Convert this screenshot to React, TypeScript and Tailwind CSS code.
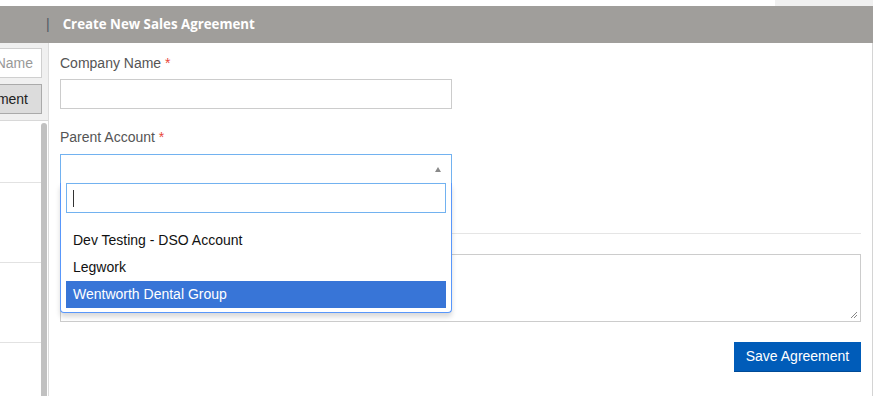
import React from 'react';

const options = ['Dev Testing - DSO Account', 'Legwork', 'Wentworth Dental Group'];

function SidePanel() {
  return (
    <div className="flex w-[49px] shrink-0 flex-col border-r border-[#dcdcdc] bg-[#f0f0f0]">
      <div className="flex flex-col gap-[6px] pt-[5px] pr-[6px]">
        <div className="flex h-[30px] items-center justify-end border border-l-0 border-[#cfcfcf] bg-white pr-[8px] text-[14px] text-[#999]">
          Name
        </div>
        <div className="flex h-[30px] items-center justify-end border border-l-0 border-[#aaa] bg-[#dcdcdc] pr-[13px] text-[14px] text-[#222]">
          ment
        </div>
      </div>
      <div className="mt-[6px] flex flex-1 border-t border-[#d8d8d8] bg-white">
        <div className="flex w-[41px] flex-col">
          <div className="h-[62px] border-b border-[#e2e2e2]" />
          <div className="h-[80px] border-b border-[#e2e2e2]" />
          <div className="h-[80px] border-b border-[#e2e2e2]" />
        </div>
        <div className="w-[6px] pt-[2px]">
          <div className="h-full rounded-t-[3px] bg-[#c1c1c1]" />
        </div>
      </div>
    </div>
  );
}

function Label({ text }: { text: string }) {
  return (
    <div className="h-[20px] text-[14px] leading-[20px] text-[#555]">
      {text} <span className="text-[#e8473a]">*</span>
    </div>
  );
}

function ParentSelect() {
  return (
    <div className="relative w-[392px]">
      <div className="flex h-[30px] items-center justify-end border border-[#72b2f0] bg-white pr-[10px]">
        <svg width="6" height="5" viewBox="0 0 6 5">
          <path d="M3 0 L6 5 L0 5 Z" fill="#8a8a8a" />
        </svg>
      </div>
      <div className="absolute left-0 top-[29px] z-10 w-[392px] rounded-b-[4px] border border-t-0 border-[#5897fb] bg-white px-[5px] pb-[4px] shadow-[0_4px_5px_rgba(0,0,0,0.15)]">
        <div className="flex h-[30px] items-center border border-[#72b2f0] bg-white pl-[6px]">
          <div className="h-[17px] w-px bg-[#333]" />
        </div>
        <div className="mt-[14px] flex flex-col">
          {options.map((o, i) => (
            <div
              key={o}
              className={`h-[27px] pl-[7px] text-[14px] leading-[27px] ${
                i === options.length - 1 ? 'bg-[#3875d7] text-white' : 'text-[#111]'
              }`}
            >
              {o}
            </div>
          ))}
        </div>
      </div>
    </div>
  );
}

export default function App() {
  return (
    <div
      className="relative h-[396px] w-[886px] overflow-hidden bg-white"
      style={{ fontFamily: '"Liberation Sans", Arial, sans-serif' }}
    >
      <div className="flex h-[6px]">
        <div className="flex-1" />
        <div className="w-[98px] bg-[#f0f0f0]" />
        <div className="w-[13px]" />
      </div>
      <div className="flex h-[390px] w-[873px] flex-col">
        <div className="flex h-[37px] shrink-0 items-center bg-[#a09e9b] pl-[46px]">
          <span className="text-[14px] text-[#505a64]">|</span>
          <span
            className="ml-[13px] text-[13.3px] font-bold text-white"
            style={{ fontFamily: '"Open Sans", sans-serif' }}
          >
            Create New Sales Agreement
          </span>
        </div>
        <div className="flex min-h-0 flex-1">
          <SidePanel />
          <div className="flex flex-1 flex-col border-r border-[#d4d4d4] pl-[11px] pr-[11px] pt-[10px]">
            <Label text="Company Name" />
            <div className="mt-[6px] h-[30px] w-[392px] border border-[#ccc]" />
            <div className="mt-[18px]">
              <Label text="Parent Account" />
            </div>
            <div className="mt-[7px]">
              <ParentSelect />
            </div>
            <div className="mt-[49px] h-px bg-[#e5e5e5]" />
            <div className="relative mt-[20px] h-[68px] border border-[#ccc]">
              <svg className="absolute bottom-[2px] right-[2px]" width="9" height="9" viewBox="0 0 9 9">
                <path d="M8 2 L2 8 M8 5 L5 8" stroke="#888" strokeWidth="1" />
              </svg>
            </div>
            <div className="mt-[20px] flex justify-end">
              <div className="flex h-[30px] w-[127px] items-center justify-center border-b border-[#004a96] bg-[#005cb9] text-[14px] text-white">
                Save Agreement
              </div>
            </div>
          </div>
        </div>
      </div>
    </div>
  );
}
